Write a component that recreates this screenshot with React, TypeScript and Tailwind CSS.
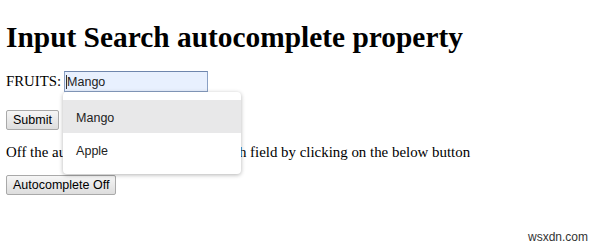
import { useState } from "react";

const serif = { fontFamily: '"Liberation Serif", "Times New Roman", serif' };

export default function App() {
  const [value, setValue] = useState("Mango");
  const fruits = ["Mango", "Apple"];

  return (
    <div className="relative w-[600px] h-[249px] bg-white text-black overflow-hidden" style={serif}>
      <div className="px-[6px] pt-[20px]">
        <h1 className="text-[29.4px] font-bold leading-[34px] mb-[17px]">Input Search autocomplete property</h1>

        <form className="text-[14.8px] leading-[17px]" onSubmit={(e) => e.preventDefault()}>
          <div className="flex items-center">
            <label htmlFor="fruits">FRUITS:</label>
            <div className="relative ml-[3px]">
              <input
                id="fruits"
                value={value}
                onChange={(e) => setValue(e.target.value)}
                className="w-[144px] h-[21px] px-[2px] border border-[#8aa0c4] border-t-[#6f86ad] bg-[#e8f0fe] text-[12.5px] text-[#222] outline-none font-['Liberation_Sans',Arial,sans-serif]"
              />
              {/* caret, the field has focus in the shot */}
              <span className="absolute left-[2px] top-[4px] w-px h-[14px] bg-[#333]" />
              {/* suggestion dropdown */}
              <ul className="absolute left-[-1px] top-[21px] w-[178px] py-[8px] bg-white rounded-[4px] shadow-[0_1px_4px_rgba(0,0,0,0.3)] z-10 font-['Liberation_Sans',Arial,sans-serif] text-[12.5px] text-[#222]">
                {fruits.map((f, i) => (
                  <li
                    key={f}
                    className={`h-[33px] flex items-center pl-[13px] pt-[3px] ${i === 0 ? "bg-[#e8e8e9]" : ""}`}
                  >
                    {f}
                  </li>
                ))}
              </ul>
            </div>
          </div>

          <button
            type="submit"
            className="mt-[18px] h-[20px] px-[6px] border border-[#a9a9a9] rounded-[2px] bg-gradient-to-b from-[#f6f6f6] to-[#dddddd] text-[12.5px] leading-none font-['Liberation_Sans',Arial,sans-serif]"
          >
            Submit
          </button>
        </form>

        <p className="mt-[14px] text-[14.9px] leading-[17px]">
          Off the autocomplete of the input search field by clicking on the below button
        </p>

        <button className="mt-[14px] h-[20px] px-[6px] border border-[#a9a9a9] rounded-[2px] bg-gradient-to-b from-[#f6f6f6] to-[#dddddd] text-[12.5px] leading-none font-['Liberation_Sans',Arial,sans-serif]">
          Autocomplete Off
        </button>
      </div>

      <span className="absolute right-[12px] bottom-[3px] text-[12px] text-[#333] font-['Liberation_Sans',Arial,sans-serif]">
        wsxdn.com
      </span>
    </div>
  );
}
